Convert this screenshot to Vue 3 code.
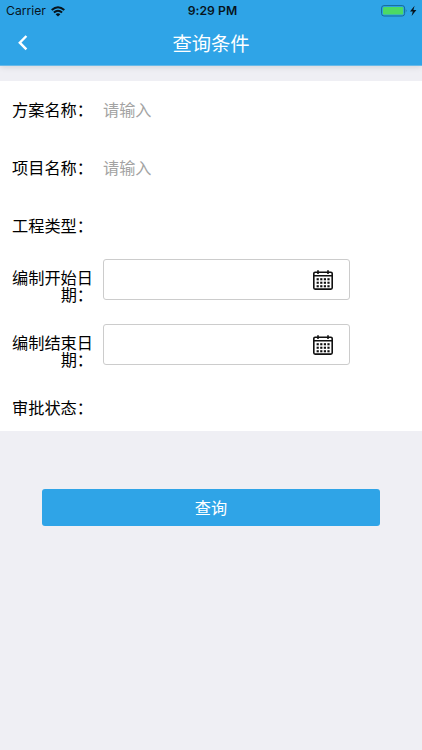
<script setup>
import { ref } from 'vue'

const fields = ref([
  { label: '方案名称：', type: 'text', value: '' },
  { label: '项目名称：', type: 'text', value: '' },
  { label: '工程类型：', type: 'select' },
  { label: '编制开始日期：', type: 'date' },
  { label: '编制结束日期：', type: 'date' },
  { label: '审批状态：', type: 'approval' },
])
const dots = [0, 1, 2].flatMap((r) => [0, 1, 2, 3].map((c) => ({ x: 3.6 + c * 3.6, y: 8.2 + r * 3.5 })))
</script>

<template>
  <div class="screen">
    <header class="header">
      <div class="status">
        <div class="carrier">
          <span>Carrier</span>
          <svg viewBox="0 0 14 11" width="14" height="11">
            <path d="M0.7 4.1 Q7 -1.5 13.3 4.1 M2.9 6.6 Q7 3 11.1 6.6" fill="none" stroke="#07141d" stroke-width="2" />
            <path d="M4.6 8.2 Q7 6.2 9.4 8.2 L7 10.6 Z" fill="#07141d" />
          </svg>
        </div>
        <div class="time">9:29 PM</div>
        <div class="power">
          <svg viewBox="0 0 36 12" width="36" height="12">
            <rect x="0.6" y="0.6" width="23" height="10.4" rx="2.4" fill="none" stroke="#176b99" stroke-width="1" />
            <rect x="2" y="2" width="20.2" height="7.6" rx="1.2" fill="#4cd964" />
            <path d="M24.8 4 Q26.4 5.8 24.8 7.6 Z" fill="#176b99" />
            <path d="M33.6 0.8 L29 6.6 H31.8 L30.6 11 L35.4 5 H32.4 Z" fill="#07141d" />
          </svg>
        </div>
      </div>
      <nav class="nav">
        <svg class="back" viewBox="0 0 10 16" width="10" height="16">
          <path d="M8.4 1 L1.8 7.7 L8.4 14.4" fill="none" stroke="#fff" stroke-width="2.4" />
        </svg>
        <h1>查询条件</h1>
      </nav>
    </header>

    <main class="form">
      <div v-for="f in fields" :key="f.label" class="row" :class="f.type">
        <label class="label">{{ f.label }}</label>
        <input v-if="f.type === 'text'" v-model="f.value" class="input" placeholder="请输入" />
        <div v-if="f.type === 'date'" class="date-box">
          <svg viewBox="0 0 20 20" width="20" height="20">
            <rect x="0.8" y="2.2" width="18.4" height="16.9" rx="1.3" fill="none" stroke="#111" stroke-width="1.6" />
            <path d="M1 5.7 H19 M5 0.2 V4 M15 0.2 V4" stroke="#111" stroke-width="1.6" />
            <rect v-for="(d, i) in dots" :key="i" :x="d.x" :y="d.y" width="2.2" height="2.1" fill="#111" />
          </svg>
        </div>
      </div>
    </main>

    <button class="submit">查询</button>
  </div>
</template>

<style>
body {
  margin: 0;
  background: #efeff4;
}
</style>

<style scoped>
.screen {
  height: 750px;
  overflow: hidden;
  background: #efeff4;
  color: #000;
  font-family: "Noto Sans CJK SC", sans-serif;
  font-size: 16.2px;
}
.header {
  height: 65px;
  background: #2fa4e7;
  border-bottom: 1px solid #68b9e8;
  box-shadow: 0 1px 6px rgba(0, 0, 0, 0.12);
}
.status {
  display: grid;
  grid-template-columns: 1fr auto 1fr;
  align-items: center;
  height: 22px;
  padding: 0 5px 0 6px;
  font: 12.2px/22px Inter, sans-serif;
  color: #07141d;
}
.carrier {
  display: flex;
  align-items: center;
  gap: 5px;
}
.time {
  padding-left: 2px;
  font-weight: 600;
  font-size: 12.2px;
  letter-spacing: 0.05px;
}
.power {
  display: flex;
  justify-content: flex-end;
}
.nav {
  display: grid;
  grid-template-columns: 40px 1fr 40px;
  align-items: center;
  height: 43px;
  color: #fff;
}
.back {
  margin: 0 0 2px 18px;
}
h1 {
  margin: 0;
  text-align: center;
  font-size: 19.3px;
  line-height: 43px;
  font-weight: 400;
}
.form {
  height: 350px;
  margin-top: 15px;
  background: #fff;
}
.row {
  display: flex;
  align-items: center;
  height: 58px;
  box-sizing: border-box;
  padding-left: 11px;
}
.label {
  width: 82px;
  flex: none;
  padding-bottom: 1px;
  text-align: right;
  line-height: 17px;
}
.input {
  width: 240px;
  margin: 0 0 2px 10px;
  padding: 0;
  border: 0;
  outline: 0;
  background: none;
  font: inherit;
  line-height: 24px;
}
.input::placeholder {
  color: #a3a3a3;
  opacity: 1;
}
.row.date {
  height: 65px;
  padding-top: 4px;
  align-items: flex-start;
}
.row.date .label {
  padding-top: 10px;
}
.row.approval {
  height: 46px;
}
.date-box {
  display: flex;
  align-items: center;
  justify-content: flex-end;
  width: 247px;
  height: 41px;
  margin-left: 10px;
  padding-right: 16px;
  box-sizing: border-box;
  border: 1px solid #ccc;
  border-radius: 3px;
}
.submit {
  display: block;
  width: 338px;
  height: 37px;
  margin: 58px 0 0 42px;
  padding: 0 0 2px;
  border: 0;
  border-radius: 3px;
  background: #2fa4e7;
  color: #fff;
  font: inherit;
}
</style>
